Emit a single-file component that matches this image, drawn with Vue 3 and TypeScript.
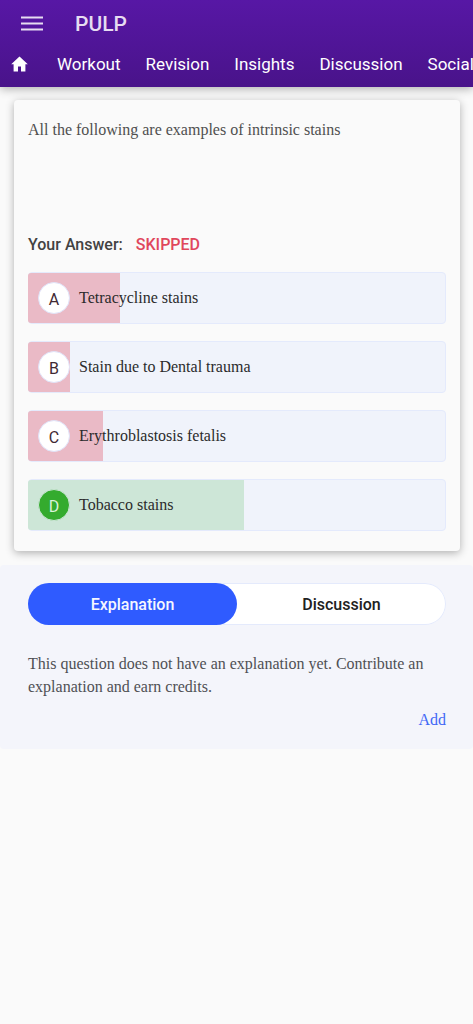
<script setup lang="ts">
import { ref } from 'vue'

interface Option {
  letter: string
  text: string
  share: number
  correct: boolean
}

const links: string[] = ['Workout', 'Revision', 'Insights', 'Discussion', 'Social']

const options: Option[] = [
  { letter: 'A', text: 'Tetracycline stains', share: 22, correct: false },
  { letter: 'B', text: 'Stain due to Dental trauma', share: 10, correct: false },
  { letter: 'C', text: 'Erythroblastosis fetalis', share: 18, correct: false },
  { letter: 'D', text: 'Tobacco stains', share: 52, correct: true },
]

const tabs: string[] = ['Explanation', 'Discussion']
const activeTab = ref('Explanation')
</script>

<template>
  <div class="page">
    <header class="header">
      <div class="title-row">
        <button class="menu" type="button" aria-label="Menu">
          <svg width="22" height="16" viewBox="0 0 22 16" aria-hidden="true">
            <path d="M0 1.5h22M0 7.5h22M0 13.5h22" stroke="currentColor" stroke-width="2.2" />
          </svg>
        </button>
        <h1 class="brand">PULP</h1>
      </div>
      <nav class="nav">
        <a class="home" href="#" aria-label="Home">
          <svg width="18" height="16" viewBox="0 0 18 16" aria-hidden="true">
            <path d="M8.5 0.6 0.2 8.2h2.4V15.4h4.4v-5h3v5h4.4V8.2h2.4z" fill="currentColor" />
          </svg>
        </a>
        <a v-for="link in links" :key="link" class="nav-link" href="#">{{ link }}</a>
      </nav>
    </header>

    <main>
      <section class="card">
        <p class="question">All the following are examples of intrinsic stains</p>
        <p class="answer">Your Answer:<span class="skipped">SKIPPED</span></p>
        <ul class="options">
          <li v-for="option in options" :key="option.letter" class="option" :class="{ correct: option.correct }">
            <span class="fill" :style="{ width: option.share + '%' }"></span>
            <span class="letter">{{ option.letter }}</span>
            <span class="text">{{ option.text }}</span>
          </li>
        </ul>
      </section>

      <section class="panel">
        <div class="tabs" role="tablist">
          <button
            v-for="tab in tabs"
            :key="tab"
            class="tab"
            :class="{ active: tab === activeTab }"
            type="button"
            role="tab"
            :aria-selected="tab === activeTab"
            @click="activeTab = tab"
          >
            {{ tab }}
          </button>
        </div>
        <p class="note">This question does not have an explanation yet. Contribute an explanation and earn credits.</p>
        <a class="add" href="#">Add</a>
      </section>
    </main>
  </div>
</template>

<style>
body {
  margin: 0;
  background: #fafafa;
}
</style>

<style scoped>
.page {
  font-family: 'Liberation Serif', serif;
  font-size: 16px;
  overflow-x: hidden;
}

.header {
  position: relative;
  height: 87px;
  color: #fff;
  font-family: Roboto, sans-serif;
  background: linear-gradient(#5717a5, #49138a);
  box-shadow: 0 2px 9px rgba(0, 0, 0, 0.3);
}

.title-row {
  display: flex;
  align-items: center;
  gap: 32px;
  height: 47px;
  padding-left: 21px;
  color: #e6dcf1;
}

.menu {
  display: flex;
  padding: 0;
  border: 0;
  background: none;
  color: inherit;
}

.brand {
  margin: 0;
  font-size: 21px;
  font-weight: 500;
}

.nav {
  display: flex;
  align-items: center;
  gap: 25px;
  height: 34px;
  padding-left: 11px;
  overflow: hidden;
  white-space: nowrap;
}

.home {
  display: flex;
  margin-right: 3px;
  color: #fff;
}

.nav-link {
  color: #fff;
  font-size: 17px;
  text-decoration: none;
}

.card {
  margin: 13px 13px 14px 14px;
  padding: 18px 14px 20px;
  border-radius: 4px;
  background: #fafafa;
  box-shadow: 0 2px 9px rgba(0, 0, 0, 0.3);
}

.question {
  margin: 0;
  min-height: 115px;
  line-height: 24px;
  color: #4f4f4f;
}

.answer {
  display: flex;
  gap: 13px;
  margin: 0 0 15px;
  line-height: 24px;
  font-family: Roboto, sans-serif;
  font-weight: 500;
  color: #424242;
}

.skipped {
  color: #e0475c;
}

.options {
  display: grid;
  gap: 17px;
  margin: 0;
  padding: 0;
  list-style: none;
}

.option {
  display: grid;
  grid-template-columns: 32px 1fr;
  align-items: center;
  gap: 9px;
  position: relative;
  height: 50px;
  padding-left: 9px;
  border: 1px solid #e4eafc;
  border-radius: 4px;
  background: #f0f3fb;
  color: #2b2b2b;
}

.fill {
  position: absolute;
  inset: 0 auto 0 -1px;
  border-radius: 3px 0 0 3px;
  background: #eabac6;
}

.correct .fill {
  background: #cde6d7;
}

.letter {
  position: relative;
  box-sizing: border-box;
  display: flex;
  align-items: center;
  justify-content: center;
  width: 32px;
  height: 32px;
  padding-top: 2px;
  border: 1px solid #e0e2f8;
  border-radius: 50%;
  background: #fff;
  color: #3f2a33;
  font-family: Roboto, sans-serif;
}

.correct .letter {
  border-color: #cde6d7;
  background: #34ab2e;
  color: #daf2da;
}

.text {
  position: relative;
}

.panel {
  display: flex;
  flex-direction: column;
  padding: 18px 27px 18px 28px;
  border-radius: 4px;
  background: #f4f5fb;
}

.tabs {
  display: flex;
  border-radius: 21px;
  background: #fff;
  box-shadow: inset 0 0 0 1px #e4eafc;
}

.tab {
  flex: 1;
  height: 42px;
  padding: 0;
  border: 0;
  border-radius: 21px;
  background: none;
  color: #212121;
  font-family: Roboto, sans-serif;
  font-size: 16px;
  font-weight: 500;
}

.tab.active {
  background: #2f5bff;
  color: #f5f7ff;
}

.note {
  margin: 27px 0 10px;
  line-height: 23px;
  color: #4f5054;
}

.add {
  align-self: flex-end;
  line-height: 23px;
  color: #4168f6;
  text-decoration: none;
}
</style>
